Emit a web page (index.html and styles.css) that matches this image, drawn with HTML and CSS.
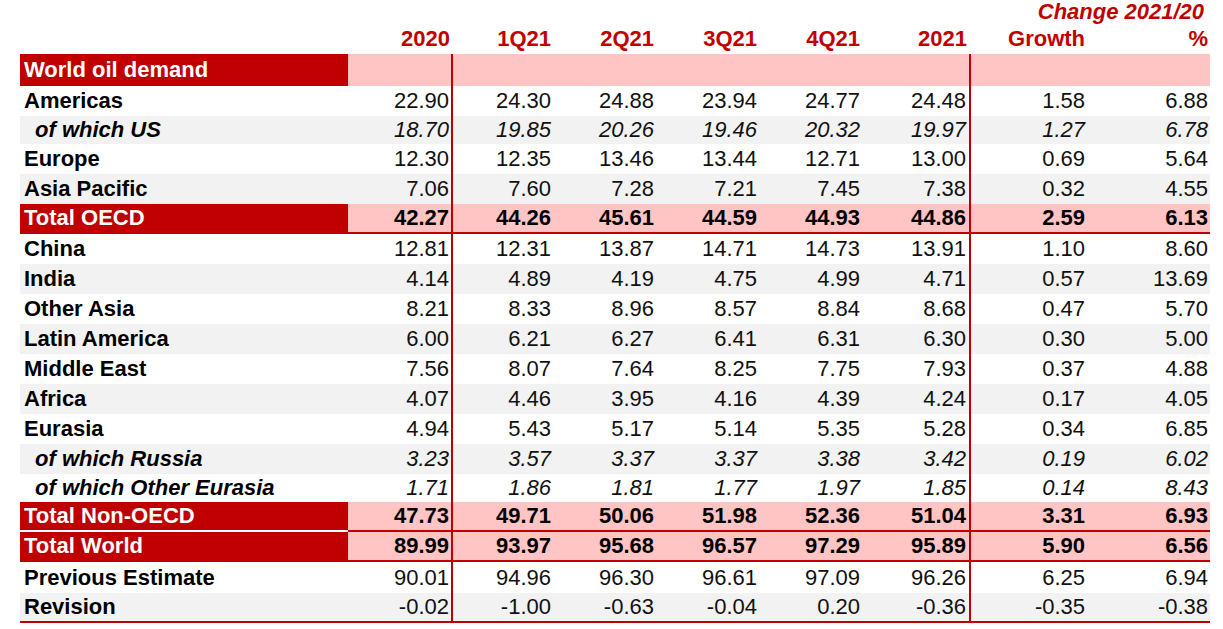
FILE: index.html
```html
<!DOCTYPE html>
<html lang="en">
<head>
<meta charset="utf-8">
<title>World oil demand</title>
<link rel="stylesheet" href="styles.css">
</head>
<body>
<table class="oil">
  <colgroup>
    <col class="c-label"><col class="c-y20"><col class="c-q"><col class="c-q"><col class="c-q"><col class="c-q"><col class="c-y21"><col class="c-gr"><col class="c-pct">
  </colgroup>
  <thead>
    <tr class="h1"><th colspan="7"></th><th colspan="2" class="change">Change 2021/20</th></tr>
    <tr class="h2"><th></th><th>2020</th><th>1Q21</th><th>2Q21</th><th>3Q21</th><th>4Q21</th><th>2021</th><th>Growth</th><th>%</th></tr>
  </thead>
  <tbody>
    <tr class="section"><td class="lab">World oil demand</td><td></td><td></td><td></td><td></td><td></td><td></td><td></td><td></td></tr>
    <tr><td class="lab">Americas</td><td>22.90</td><td>24.30</td><td>24.88</td><td>23.94</td><td>24.77</td><td>24.48</td><td>1.58</td><td>6.88</td></tr>
    <tr class="sub alt short"><td class="lab">of which US</td><td>18.70</td><td>19.85</td><td>20.26</td><td>19.46</td><td>20.32</td><td>19.97</td><td>1.27</td><td>6.78</td></tr>
    <tr><td class="lab">Europe</td><td>12.30</td><td>12.35</td><td>13.46</td><td>13.44</td><td>12.71</td><td>13.00</td><td>0.69</td><td>5.64</td></tr>
    <tr class="alt"><td class="lab">Asia Pacific</td><td>7.06</td><td>7.60</td><td>7.28</td><td>7.21</td><td>7.45</td><td>7.38</td><td>0.32</td><td>4.55</td></tr>
    <tr class="total"><td class="lab">Total OECD</td><td>42.27</td><td>44.26</td><td>45.61</td><td>44.59</td><td>44.93</td><td>44.86</td><td>2.59</td><td>6.13</td></tr>
    <tr><td class="lab">China</td><td>12.81</td><td>12.31</td><td>13.87</td><td>14.71</td><td>14.73</td><td>13.91</td><td>1.10</td><td>8.60</td></tr>
    <tr class="alt"><td class="lab">India</td><td>4.14</td><td>4.89</td><td>4.19</td><td>4.75</td><td>4.99</td><td>4.71</td><td>0.57</td><td>13.69</td></tr>
    <tr><td class="lab">Other Asia</td><td>8.21</td><td>8.33</td><td>8.96</td><td>8.57</td><td>8.84</td><td>8.68</td><td>0.47</td><td>5.70</td></tr>
    <tr class="alt"><td class="lab">Latin America</td><td>6.00</td><td>6.21</td><td>6.27</td><td>6.41</td><td>6.31</td><td>6.30</td><td>0.30</td><td>5.00</td></tr>
    <tr><td class="lab">Middle East</td><td>7.56</td><td>8.07</td><td>7.64</td><td>8.25</td><td>7.75</td><td>7.93</td><td>0.37</td><td>4.88</td></tr>
    <tr class="alt"><td class="lab">Africa</td><td>4.07</td><td>4.46</td><td>3.95</td><td>4.16</td><td>4.39</td><td>4.24</td><td>0.17</td><td>4.05</td></tr>
    <tr><td class="lab">Eurasia</td><td>4.94</td><td>5.43</td><td>5.17</td><td>5.14</td><td>5.35</td><td>5.28</td><td>0.34</td><td>6.85</td></tr>
    <tr class="sub alt"><td class="lab">of which Russia</td><td>3.23</td><td>3.57</td><td>3.37</td><td>3.37</td><td>3.38</td><td>3.42</td><td>0.19</td><td>6.02</td></tr>
    <tr class="sub short"><td class="lab">of which Other Eurasia</td><td>1.71</td><td>1.86</td><td>1.81</td><td>1.77</td><td>1.97</td><td>1.85</td><td>0.14</td><td>8.43</td></tr>
    <tr class="total split"><td class="lab">Total Non-OECD</td><td>47.73</td><td>49.71</td><td>50.06</td><td>51.98</td><td>52.36</td><td>51.04</td><td>3.31</td><td>6.93</td></tr>
    <tr class="total"><td class="lab">Total World</td><td>89.99</td><td>93.97</td><td>95.68</td><td>96.57</td><td>97.29</td><td>95.89</td><td>5.90</td><td>6.56</td></tr>
    <tr class="prev"><td class="lab">Previous Estimate</td><td>90.01</td><td>94.96</td><td>96.30</td><td>96.61</td><td>97.09</td><td>96.26</td><td>6.25</td><td>6.94</td></tr>
    <tr class="alt last"><td class="lab">Revision</td><td>-0.02</td><td>-1.00</td><td>-0.63</td><td>-0.04</td><td>0.20</td><td>-0.36</td><td>-0.35</td><td>-0.38</td></tr>
  </tbody>
</table>
</body>
</html>
```

FILE: styles.css
```css
html, body {
  margin: 0;
  padding: 0;
  background: #ffffff;
}

.oil {
  margin-left: 20px;
  width: 1190px;
  table-layout: fixed;
  border-collapse: collapse;
  border-spacing: 0;
  font-family: "Liberation Sans", Arial, sans-serif;
  font-size: 22px;
  color: #111111;
}

.c-label { width: 328px; }
.c-y20 { width: 104px; }
.c-q { width: 103px; }
.c-y21 { width: 106px; }
.c-gr { width: 120px; }
.c-pct { width: 120px; }

.oil th,
.oil td {
  padding: 0 4px 0 0;
  text-align: right;
  white-space: nowrap;
  line-height: 1;
  vertical-align: middle;
}

.oil th {
  color: #c00000;
  font-weight: bold;
}

.oil .h1 th { height: 24px; }
.oil .h1 .change {
  font-style: italic;
  padding-right: 6px;
}
.oil .h2 th { height: 30px; }

.oil th:nth-child(2),
.oil td:nth-child(2) { padding-right: 2px; }
.oil th:nth-child(7),
.oil td:nth-child(7) { padding-right: 3px; }
.oil th:nth-child(8),
.oil td:nth-child(8) { padding-right: 5px; }
.oil th:nth-child(9),
.oil td:nth-child(9) { padding-right: 2px; }

.oil tbody td { height: 30px; }
.oil tbody tr.short td { height: 28px; }
.oil tbody tr.prev td { height: 31px; }

.oil tbody td:nth-child(2),
.oil tbody td:nth-child(7) {
  border-right: 2px solid #c00000;
}

.oil td.lab {
  text-align: left;
  padding-left: 4px;
  font-weight: bold;
  color: #000000;
}

.oil tr.alt td { background: #f2f2f2; }

.oil tr.sub td { font-style: italic; }
.oil tr.sub td.lab { padding-left: 15px; }

.oil tr.section td { background: #ffc5c5; }
.oil tr.section td.lab {
  background: #c00000;
  color: #ffffff;
  height: 32px;
}

.oil tr.total td {
  height: 28px;
  background: #ffc5c5;
  font-weight: bold;
  color: #000000;
  border-bottom: 2px solid #c00000;
}
.oil tr.total td.lab {
  background: #c00000;
  color: #ffffff;
}
.oil tr.total.split td.lab { border-bottom-color: #ffffff; }

.oil tr.last td {
  height: 28px;
  border-bottom: 2px solid #c00000;
}
```
